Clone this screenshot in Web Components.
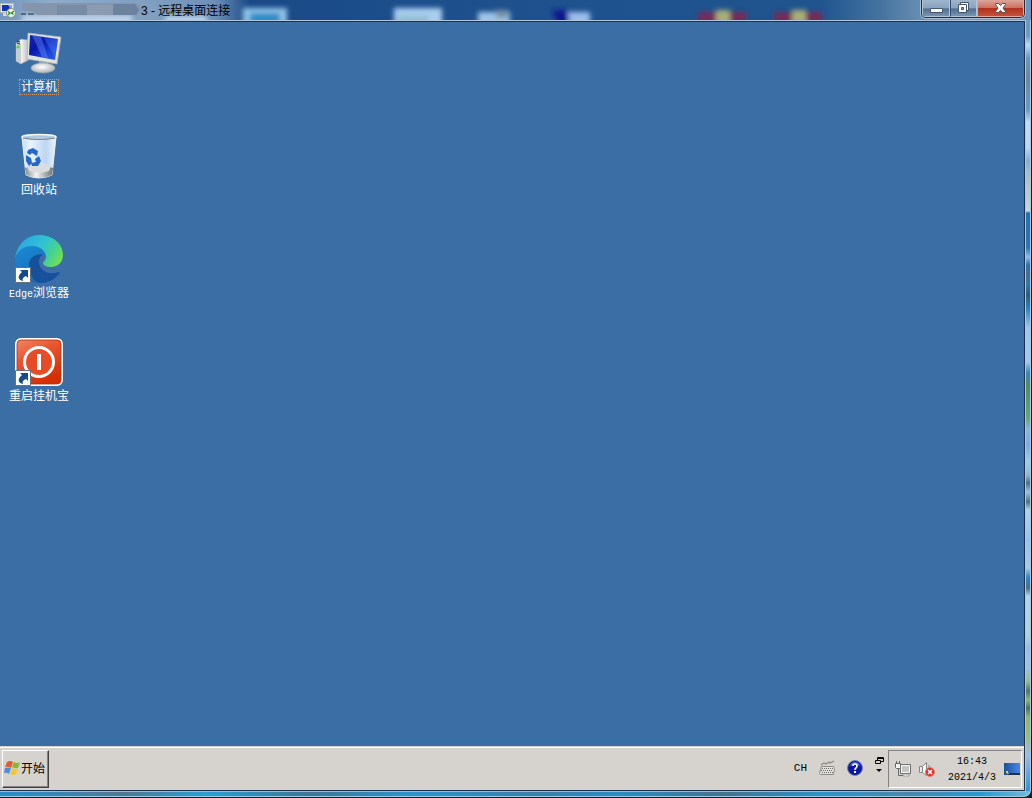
<!DOCTYPE html>
<html lang="zh-CN">
<head>
<meta charset="utf-8">
<title>远程桌面连接</title>
<style>
  html, body {
    height: 100%;
    margin: 0;
    background: #12232f;
    overflow: hidden;
  }
  body {
    font-family: "Liberation Sans", "Noto Sans CJK SC", sans-serif;
    font-size: 12px;
  }
</style>
</head>
<body>
<remote-window>
  <window-title slot="title" host="3">远程桌面连接</window-title>
  <desktop-area>
    <desktop-icon icon="computer" selected>计算机</desktop-icon>
    <desktop-icon icon="bin">回收站</desktop-icon>
    <desktop-icon icon="edge" shortcut>Edge浏览器</desktop-icon>
    <desktop-icon icon="power" shortcut>重启挂机宝</desktop-icon>
  </desktop-area>
  <task-bar slot="taskbar">
    <start-button>开始</start-button>
    <language-bar slot="right">CH</language-bar>
    <system-tray slot="right" time="16:43" date="2021/4/3"></system-tray>
  </task-bar>
</remote-window>

<script>
const RESET = '*, *:before, *:after { box-sizing: border-box; } svg { display: block; flex: none; }';

const ICONS = {
  computer: `
    <svg width="48" height="48" viewBox="0 0 48 48" aria-hidden="true">
      <defs>
        <linearGradient id="scr" x1="0" y1="0" x2="1" y2="1">
          <stop offset="0" stop-color="#1427a0"/><stop offset=".35" stop-color="#0714a8"/>
          <stop offset=".6" stop-color="#1638cf"/><stop offset="1" stop-color="#2d62ee"/>
        </linearGradient>
        <linearGradient id="case" x1="0" x2="1">
          <stop offset="0" stop-color="#aeb3b5"/><stop offset=".35" stop-color="#f5f6f6"/><stop offset="1" stop-color="#b7bbbe"/>
        </linearGradient>
        <radialGradient id="foot" cx=".45" cy=".4" r=".6">
          <stop offset="0" stop-color="#ffffff"/><stop offset="1" stop-color="#adb2b5"/>
        </radialGradient>
      </defs>
      <path d="M1 14l5-4 8 1v20l-8 4-5-3z" fill="url(#case)" stroke="#8f9699" stroke-width=".6"/>
      <path d="M1 14l5 1v20l-5-3z" fill="#c9cccd"/>
      <path d="M2 12l3 1M2 14l3 1" stroke="#333" stroke-width="1.200"/>
      <circle cx="3" cy="18" r="1.500" fill="#5bd21b"/>
      <path d="M24 32l9 2 1 5h-10z" fill="#9ba1a5"/>
      <ellipse cx="28" cy="39" rx="12" ry="5" fill="url(#foot)" stroke="#a2a7aa" stroke-width=".6"/>
      <path d="M13 4l33 4-4 27-30-5z" fill="#dfe2e3" stroke="#a9aeb1" stroke-width=".8"/>
      <path d="M15 6l28 4-3 21-26-5z" fill="url(#scr)"/>
      <path d="M17 6l9 1 7 22-6-1z" fill="#5f8bfa" opacity=".45"/>
      <path d="M28 8l15 2-3 18z" fill="#5f8bfa" opacity=".3"/>
    </svg>`,
  bin: `
    <svg width="48" height="48" viewBox="0 0 48 48" aria-hidden="true">
      <defs>
        <linearGradient id="glass" x1="0" x2="1">
          <stop offset="0" stop-color="#c9daec"/><stop offset=".25" stop-color="#eaf3fc"/>
          <stop offset=".7" stop-color="#bdd6f1"/><stop offset="1" stop-color="#e9f2fb"/>
        </linearGradient>
        <linearGradient id="base" x1="0" x2="1">
          <stop offset="0" stop-color="#8a8d90"/><stop offset=".4" stop-color="#f3f3f3"/><stop offset="1" stop-color="#6f7478"/>
        </linearGradient>
      </defs>
      <path d="M7 5q17-4 34 0l-4 38q-13 6-26 0z" fill="url(#glass)" stroke="#e9f0f7" stroke-width="1"/>
      <path d="M10 36q14-6 28 0l-1 7q-13 6-26 0z" fill="url(#base)"/>
      <path d="M12 34q12-7 24 0l-2 5q-10 3-20 0z" fill="#d9dde0"/>
      <ellipse cx="24" cy="5" rx="17" ry="2.500" fill="#abc9e8" stroke="#f5f8fa" stroke-width="1.500"/>
      <path d="M8 6q16 3 32 0" fill="none" stroke="#777c82" stroke-width="1.200"/>
      <g fill="#2469c8">
        <path d="M13 18l5-2 5 3-1 5-5-3-2 2-3-2z"/>
        <path d="M11 23l5 3 1 5-3 3-3-5z"/>
        <path d="M20 27l4-3 2 5-3 5h-6l-1-3 5-1z"/>
      </g>
    </svg>`,
  edge: `
    <svg width="48" height="48" viewBox="0 0 48 48" aria-hidden="true">
      <defs>
        <linearGradient id="top" x1="0" y1=".2" x2="1" y2=".6">
          <stop offset="0" stop-color="#27a5df"/><stop offset=".5" stop-color="#2fc0d6"/>
          <stop offset=".75" stop-color="#3fcf9c"/><stop offset="1" stop-color="#6fdf55"/>
        </linearGradient>
        <linearGradient id="mid" x1="0" y1="0" x2=".7" y2="1">
          <stop offset="0" stop-color="#1c8bd4"/><stop offset="1" stop-color="#1467b5"/>
        </linearGradient>
      </defs>
      <path d="M0 24C2 15 9 10 17 10c10 0 15 6 14 10-5 0-8 3-8 8 0 8 9 13 21 9-4 7-12 11-20 11C10 48 0 38 0 24z" fill="url(#mid)"/>
      <path d="M14 30c0-7 5-11 14-11-3 2-4 5-4 8 0 8 9 14 20 10 1 0 1 1 0 2-5 6-12 9-19 9-6-1-11-9-11-18z" fill="#17509b"/>
      <path d="M0 23C2 9 12 0 24 0c14 0 24 9 24 20 0 8-6 12-12 12-5 0-8-2-8-4 0-1 3-3 3-6 0-6-6-11-14-11C9 11 3 15 0 23z" fill="url(#top)"/>
    </svg>`,
  power: `
    <svg width="48" height="48" viewBox="0 0 48 48" aria-hidden="true">
      <defs>
        <linearGradient id="red" x1="0" y1="0" x2=".5" y2="1">
          <stop offset="0" stop-color="#f28a68"/><stop offset=".4" stop-color="#eb5732"/><stop offset="1" stop-color="#d62e05"/>
        </linearGradient>
      </defs>
      <rect x="1" y="1" width="46" height="46" rx="5" fill="url(#red)" stroke="#ffffff" stroke-width="2"/>
      <rect x="2" y="2" width="44" height="44" rx="4" fill="none" stroke="#a83012" stroke-width=".8"/>
      <circle cx="24" cy="24" r="14.500" fill="#e84c27" stroke="#ffffff" stroke-width="3"/>
      <path d="M24 16v16" stroke="#ffffff" stroke-width="4"/>
    </svg>`
};

class RemoteWindow extends HTMLElement {
  constructor() {
    super();
    this.attachShadow({ mode: 'open' });
  }
  connectedCallback() {
    this.shadowRoot.innerHTML = `
      <style>
      ${RESET}
      :host {
        display: flex;
        flex-direction: column;
        box-sizing: border-box;
        height: 100vh;
        padding: 0 5px 5px 0;
        border-right: 1px solid #0b1820;
        border-bottom: 1px solid #0b1820;
        border-radius: 0 0 8px 0;
        box-shadow: inset -1px -1px #8fd0e6;
        background:
          linear-gradient(90deg, #2b8ec6 0, #3489bd 4%, #53778f 12%, #2a9fd4 20%, #3f7595 30%, #2d94cc 40%, #3b7ea8 52%,
            #2c8dc4 60%, #46718d 70%, #2f93c9 80%, #4d86a9 88%, #2998d0 95%, #78b9d8 100%) 0 100% / 100% 6px no-repeat,
          linear-gradient(#6b93bb 0, #6f9ac4 36px, #c2daf6 45px, #7195b6 58px, #708898 78px, #6c9ac4 110px, #c3daf1 122px,
            #bdd7f0 148px, #84aed1 160px, #a9bbc6 172px, #c6d6e2 211px, #2770ab 213px, #2b77b3 248px, #91bdea 257px,
            #2a71ad 265px, #4c6d88 275px, #2e78ac 285px, #315c77 295px, #2782bd 308px, #a3c5ee 328px, #a6c7ec 362px,
            #3b83b8 373px, #4f8d60 385px, #65a879 418px, #8eb5df 430px, #82a7e5 445px, #a4cde2 462px, #93b9ca 475px,
            #546f83 483px, #9cc3dc 492px, #556e7e 502px, #b2d4e8 510px, #9fbfe9 540px, #a9cbe9 568px, #3187c4 577px,
            #526e7e 588px, #b3d4e9 596px, #b2d2e0 635px, #9ebce3 647px, #a5bfe3 668px, #9ab98b 682px, #57706f 691px,
            #91b670 700px, #526d66 708px, #95b36c 717px, #9dbe83 740px, #9fbde3 755px, #3891cd 790px) 100% 0 / 6px 100% no-repeat,
          #3d79a9;
      }
      .client {
        flex: 1;
        min-height: 0;
        display: flex;
        flex-direction: column;
        border: 1px solid #b5c6d8;
        border-left: 0;
        border-bottom-color: #9cbbd0;
      }
      .screen {
        flex: 1;
        min-height: 0;
        display: flex;
        flex-direction: column;
        border: 1px solid #1b3350;
        border-left: 0;
      }
      </style>
      <slot name="title"></slot>
      <div class="client">
        <div class="screen">
          <slot></slot>
          <slot name="taskbar"></slot>
        </div>
      </div>`;
  }
}

class WindowTitle extends HTMLElement {
  constructor() {
    super();
    this.attachShadow({ mode: 'open' });
  }
  connectedCallback() {
    this.shadowRoot.innerHTML = `
      <style>
      ${RESET}
      :host {
        display: flex;
        flex: none;
        height: 20px;
        margin-right: -5px;
        position: relative;
        overflow: hidden;
        background: linear-gradient(90deg, #7397bf 0, #8eabc9 50px, #809fc1 150px, #6c8fb8 215px, #1a4986 250px,
          #1c4e8c 400px, #1e528e 600px, #1f548f 820px, #45739f 880px, #6f94b7 930px, #6d94bc 100%);
      }
      .glass {
        position: absolute;
        left: 0;
        top: 0;
      }
      .caption {
        flex: 1;
        position: relative;
        display: flex;
        align-items: flex-start;
        padding-top: 1px;
        color: #000;
        line-height: 20px;
        white-space: pre;
      }
      .address {
        margin-left: 5px;
      }
      .buttons {
        position: relative;
        display: flex;
        height: 18px;
        margin-right: 6px;
        border: 1px solid #1c2f45;
        border-top: 0;
        border-radius: 0 0 5px 5px;
        box-shadow: 0 0 0 1px #a9bfd5;
        overflow: hidden;
      }
      button {
        display: flex;
        justify-content: center;
        width: 28px;
        height: 17px;
        padding: 2px 0 0;
        border: 1px solid #b1c3d6;
        border-top: 0;
        background: linear-gradient(#9eb4cb 0, #8aa4c0 50%, #4f6f93 55%, #7794b1 100%);
      }
      button + button {
        width: 27px;
        border-left-color: #344f6e;
      }
      button.close {
        width: 47px;
        border-color: #dfa79d;
        background: linear-gradient(#dda49b 0, #cc7161 48%, #b2311c 52%, #c6503a 100%);
      }
      </style>
      <svg class="glass" width="900" height="20" aria-hidden="true">
        <defs>
          <filter id="haze" x="-20%" y="-50%" width="140%" height="200%"><feGaussianBlur stdDeviation="2.500"/></filter>
        </defs>
        <g filter="url(#haze)">
          <path d="M22 15h110v9H22zM165 16h42v8h-42z" fill="#bdd3ea"/>
          <path d="M243 8h44v18h-44z" fill="#8fc4e8"/><path d="M250 13h30v12h-30z" fill="#2b8dc8"/>
          <path d="M394 8h48v18h-48z" fill="#a8cdee"/><path d="M398 16h30v8h-30z" fill="#8fbcd0"/>
          <path d="M478 12h32v14h-32z" fill="#9fc4e8"/><path d="M496 10h12v8h-12z" fill="#7992a6"/>
          <path d="M552 10h16v14h-10z" fill="#0b188d"/><path d="M568 12h22v14h-20z" fill="#9dbdec"/>
          <path d="M698 12h48v12h-48zM774 12h48v12h-48z" fill="#752b56"/>
          <path d="M716 10h14v14h-14zM792 10h14v14h-14z" fill="#a9ae77"/>
        </g>
      </svg>
      <div class="caption">
        <svg width="16" height="17" viewBox="0 0 16 17" aria-hidden="true">
          <path d="M.5 2.500h13v9H.5z" fill="#e5e7df" stroke="#b4bcb5"/>
          <path d="M2 4h10v6H2z" fill="#1231b8"/><path d="M8 4h4v6z" fill="#7fa2f5"/>
          <path d="M3 12h7v3H3z" fill="#d6d8ca"/>
          <circle cx="11" cy="12" r="4.500" fill="#f0f4e8" stroke="#8a9384"/>
          <path d="M8 10.500l2 1.500-2 2M14 10l-2.500 2 2 1.500" fill="none" stroke="#248a24" stroke-width="1.300"/>
        </svg>
        <svg class="address" width="120" height="19" viewBox="0 0 120 19" aria-hidden="true">
          <path d="M0 13h5M7 13h6" stroke="#182431"/>
          <path d="M2 2h112q6 2 6 6l-4 6H16l-5-4H3q-4-3-1-8z" fill="#8596ac"/>
          <path d="M36 4h30v10H36z" fill="#798ca5"/><path d="M66 4h26v10H66z" fill="#8b9cb2"/>
          <path d="M92 3h22l4 6-3 5H92z" fill="#6c829e"/>
        </svg>
        <span>${this.getAttribute('host')} - <slot></slot></span>
      </div>
      <div class="buttons">
        <button type="button" aria-label="最小化">
          <svg width="13" height="13" viewBox="0 0 13 13"><path d="M.5 6.500h12v4H.5z" fill="#fff" stroke="#46556b"/></svg>
        </button>
        <button type="button" aria-label="还原">
          <svg width="13" height="13" viewBox="0 0 13 13">
            <path d="M3.500.5h8v8h-8z" fill="#fff" stroke="#46556b"/>
            <path d="M1.500 2.500h8v8h-8z" fill="#fff" stroke="#46556b"/>
            <path d="M4.500 5.500h2v2h-2z" fill="#7f97b3" stroke="#46556b"/>
          </svg>
        </button>
        <button type="button" class="close" aria-label="关闭">
          <svg width="13" height="12" viewBox="0 0 13 12">
            <path d="M1.500 1.500h3l2 2 2-2h3v1L9 6l2.500 3.500v1h-3l-2-2-2 2h-3v-1L4 6 1.500 2.500z" fill="#fff" stroke="#5b4651"/>
          </svg>
        </button>
      </div>`;
  }
}

class DesktopArea extends HTMLElement {
  constructor() {
    super();
    this.attachShadow({ mode: 'open' });
  }
  connectedCallback() {
    this.shadowRoot.innerHTML = `
      <style>
      :host {
        flex: 1;
        min-height: 0;
        box-sizing: border-box;
        display: flex;
        flex-direction: column;
        align-items: flex-start;
        gap: 37px;
        padding: 7px 0 0 1px;
        background: #3a6ea5;
      }
      </style>
      <slot></slot>`;
  }
}

class DesktopIcon extends HTMLElement {
  constructor() {
    super();
    this.attachShadow({ mode: 'open' });
  }
  connectedCallback() {
    const shortcut = this.hasAttribute('shortcut') ? `
      <svg class="arrow" width="16" height="16" viewBox="0 0 16 16" aria-hidden="true">
        <path d="M.5.5h15v15H.5z" fill="#fff" stroke="#66737f"/>
        <path d="M5 3h8v8l-2-2c-3 1-4 3-3 5-5-1-6-5-1-9z" fill="#174a8b"/>
      </svg>` : '';
    this.shadowRoot.innerHTML = `
      <style>
      ${RESET}
      :host {
        display: block;
        width: 76px;
      }
      button {
        display: flex;
        flex-direction: column;
        align-items: center;
        gap: 2px;
        width: 100%;
        padding: 0;
        border: 0;
        background: none;
        color: #fff;
        font: 12px/14px "Liberation Sans", "Noto Sans CJK SC", sans-serif;
        white-space: nowrap;
      }
      .picture {
        position: relative;
      }
      .arrow {
        position: absolute;
        left: 0;
        bottom: 0;
      }
      .label {
        height: 16px;
        padding: 0 1px;
        border: 1px dotted transparent;
      }
      :host([selected]) .label {
        border-color: #d69a66;
      }
      .latin {
        font-family: "Liberation Mono", monospace;
        font-size: 10px;
        line-height: 12px;
      }
      </style>
      <button type="button">
        <span class="picture">${ICONS[this.getAttribute('icon')]}${shortcut}</span>
        <span class="label">${this.textContent.replace(/([A-Za-z]+)/, '<span class="latin">$1</span>')}</span>
      </button>`;
  }
}

class TaskBar extends HTMLElement {
  constructor() {
    super();
    this.attachShadow({ mode: 'open' });
  }
  connectedCallback() {
    this.shadowRoot.innerHTML = `
      <style>
      ${RESET}
      :host {
        display: flex;
        flex: none;
        justify-content: space-between;
        box-sizing: border-box;
        height: 44px;
        padding: 2px;
        border-top: 1px solid #d6d3ce;
        box-shadow: inset 0 1px #fff;
        background: #d6d3ce;
      }
      .start, .right {
        display: flex;
        padding-top: 1px;
      }
      .right {
        gap: 4px;
      }
      </style>
      <div class="start"><slot></slot></div>
      <div class="right"><slot name="right"></slot></div>`;
  }
}

class StartButton extends HTMLElement {
  constructor() {
    super();
    this.attachShadow({ mode: 'open' });
  }
  connectedCallback() {
    this.shadowRoot.innerHTML = `
      <style>
      ${RESET}
      :host {
        display: flex;
      }
      button {
        display: flex;
        align-items: center;
        padding: 0 3px 2px 1px;
        border: 1px solid #fff;
        border-right-color: #424142;
        border-bottom-color: #424142;
        box-shadow: inset -1px -1px #848284;
        background: #d6d3ce;
        color: #000;
        font: 12px/16px "Noto Sans CJK SC", sans-serif;
        white-space: nowrap;
      }
      </style>
      <button type="button">
        <svg width="17" height="16" viewBox="0 0 17 16" aria-hidden="true">
          <path d="M3 2q3-2 6 0L7 8Q4 6 1 7z" fill="#e35b2b"/>
          <path d="M10 2q3 2 6 0l-2 6q-3 1-6-1z" fill="#83b83b"/>
          <path d="M1 8q3-1 6 0l-2 6q-2-2-5-1z" fill="#4b8fdc"/>
          <path d="M8 8q3 2 6 1l-2 5q-3 2-6 0z" fill="#f5c52d"/>
        </svg>
        <slot></slot>
      </button>`;
  }
}

class LanguageBar extends HTMLElement {
  constructor() {
    super();
    this.attachShadow({ mode: 'open' });
  }
  connectedCallback() {
    this.shadowRoot.innerHTML = `
      <style>
      ${RESET}
      :host {
        display: flex;
        align-items: center;
        box-sizing: border-box;
        gap: 12px;
        padding-bottom: 3px;
        color: #000;
        font: 11px/16px "Liberation Mono", monospace;
      }
      button {
        padding: 0;
        border: 0;
        background: none;
        font: inherit;
        color: inherit;
      }
      .options {
        align-self: flex-start;
        padding-top: 7px;
      }
      </style>
      <button type="button"><slot></slot></button>
      <button type="button" aria-label="键盘">
        <svg width="16" height="16" viewBox="0 0 16 16">
          <path d="M2 5l3-2 2 1 3-2 1 1 4-2" fill="none" stroke="#8c8a86" stroke-width="1.300"/>
          <path d="M2.500 6.500h12l1 2-1 6H1.500l-1-1z" fill="#e3e1dc" stroke="#8c8a86"/>
          <path d="M3 8.500h11M2 10.500h12M3 12.500h11" stroke="#6f6d6a" stroke-dasharray="1 1"/>
        </svg>
      </button>
      <button type="button" aria-label="帮助">
        <svg width="16" height="16" viewBox="0 0 16 16">
          <circle cx="8" cy="8" r="7.500" fill="#0a18a5" stroke="#7184a9"/>
          <path d="M3 6q1-4 5-4 4 0 5 4-5-2-10 0z" fill="#4c6ae0"/>
          <path d="M6 6q0-2 2-2t2 2q0 1-1 2-1 .6-1 2" fill="none" stroke="#fff" stroke-width="1.600"/>
          <path d="M7 11h2v2H7z" fill="#fff"/>
        </svg>
      </button>
      <button type="button" class="options" aria-label="选项">
        <svg width="9" height="18" viewBox="0 0 9 18">
          <path d="M2.500 3V.5h6v4H6M2 1.500h7M.5 3.500h5v3h-5z" fill="none" stroke="#000"/>
          <path d="M1 12h6L4 15z" fill="#000"/>
        </svg>
      </button>`;
  }
}

class SystemTray extends HTMLElement {
  constructor() {
    super();
    this.attachShadow({ mode: 'open' });
  }
  connectedCallback() {
    this.shadowRoot.innerHTML = `
      <style>
      ${RESET}
      :host {
        display: flex;
        align-items: center;
        box-sizing: border-box;
        gap: 8px;
        padding: 0 1px 0 6px;
        border: 1px solid #848284;
        border-right-color: #fff;
        border-bottom-color: #fff;
      }
      time {
        padding: 2px 0 0 5px;
        color: #000;
        font: 10px/16px "Liberation Mono", monospace;
        text-align: center;
      }
      time span {
        display: block;
      }
      </style>
      <svg width="16" height="16" viewBox="0 0 16 16" role="img" aria-label="网络">
        <path d="M5.500 3.500h10v9h-10z" fill="#c5c5c3" stroke="#6f6f6e"/>
        <path d="M6.500 4.500h8v7h-8z" fill="none" stroke="#f7f7f7"/>
        <path d="M8 13h6v2H8z" fill="#f4f4f4" stroke="#848484" stroke-width=".7"/>
        <path d="M.5 2.500h5v4l-1 1h-3l-1-1z" fill="#f3f3f3" stroke="#666"/>
        <path d="M1.500 0v3M4.500 0v3M3.500 8v6.500H8" fill="none" stroke="#666"/>
      </svg>
      <svg width="16" height="16" viewBox="0 0 16 16" role="img" aria-label="音量">
        <path d="M.5 5.500h3v6h-3z" fill="#e8e8e8" stroke="#858585"/>
        <path d="M3.500 5.500l4-4v13l-4-3z" fill="#fafafa" stroke="#858585"/>
        <path d="M9.500 4q1 1 1 3" fill="none" stroke="#858585"/>
        <circle cx="11" cy="11" r="4.500" fill="#dc2d26" stroke="#e47c74"/>
        <path d="M9 9l4 4M13 9l-4 4" stroke="#fff" stroke-width="1.700"/>
      </svg>
      <time><span>${this.getAttribute('time')}</span><span>${this.getAttribute('date')}</span></time>
      <svg width="16" height="16" viewBox="0 0 16 16" role="img" aria-label="显示">
        <defs><linearGradient id="sky" x1="0" x2="1"><stop offset="0" stop-color="#17539b"/><stop offset="1" stop-color="#4a87e5"/></linearGradient></defs>
        <path d="M0 2h16v12H0z" fill="url(#sky)"/>
        <path d="M4 12h12v2H4z" fill="#20303f"/>
        <path d="M2 10h2v2H2z" fill="#e8c95c"/><path d="M3 12h2v1H3z" fill="#70b9e8"/>
      </svg>`;
  }
}

customElements.define('remote-window', RemoteWindow);
customElements.define('window-title', WindowTitle);
customElements.define('desktop-area', DesktopArea);
customElements.define('desktop-icon', DesktopIcon);
customElements.define('task-bar', TaskBar);
customElements.define('start-button', StartButton);
customElements.define('language-bar', LanguageBar);
customElements.define('system-tray', SystemTray);
</script>
</body>
</html>
